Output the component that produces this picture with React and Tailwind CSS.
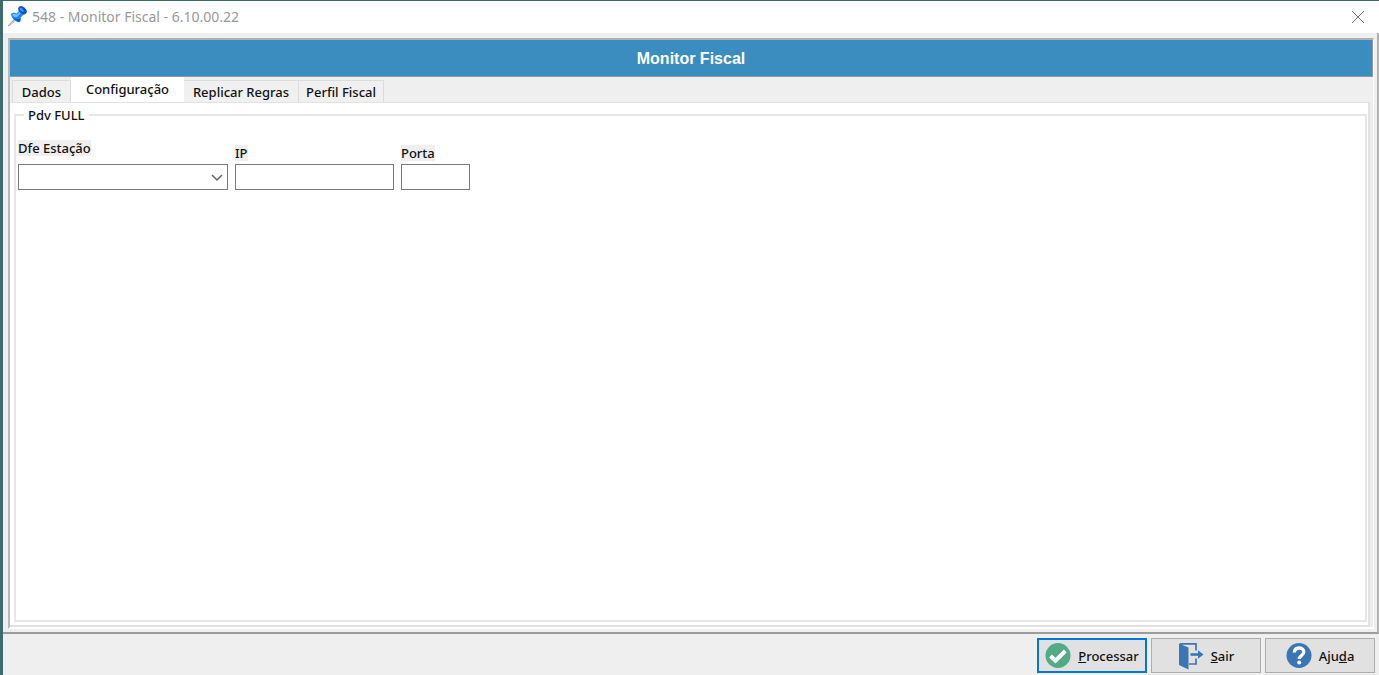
import React, { useState } from "react";

const tabs = [
  { id: "dados", label: "Dados", width: "w-[59px]" },
  { id: "config", label: "Configuração", width: "w-[113px]" },
  { id: "regras", label: "Replicar Regras", width: "w-[115px]" },
  { id: "perfil", label: "Perfil Fiscal", width: "w-[85px]" },
];

const PinIcon = () => (
  <svg width="20" height="22" viewBox="0 0 20 22" aria-hidden="true">
    <path d="M1 20 8 12l2 2-8 6.500z" fill="#c9c9cc" />
    <path d="M1 20 7.500 13" stroke="#a3a3a8" strokeWidth="1" />
    <path
      d="M4 8c1.600-1.500 4-1.400 5.500-.6L13.500 3.500l4 4-3.800 4c.6 1.800.2 3.800-1.400 5C8.500 15.800 4.500 12 4 8z"
      fill="#1c86ee"
    />
    <path d="M5 8.500c2-1.200 4-.6 5 0l4-4 1.300 1.300L10 11C8 11.500 6 10.500 5 8.500z" fill="#6cc0ff" />
    <path d="M12.500 15.700c-3-.6-5-2.200-6.500-4.200 3 2 5 2.500 7.200 1z" fill="#0b4fc4" />
    <ellipse cx="15.500" cy="4.300" rx="4.800" ry="3.300" transform="rotate(42 15.500 4.300)" fill="#0d50c8" />
    <ellipse cx="14.700" cy="3.900" rx="2.500" ry="1.300" transform="rotate(42 14.700 3.900)" fill="#3d9bf5" />
  </svg>
);

const CheckIcon = () => (
  <svg width="26" height="26" viewBox="0 0 26 26" aria-hidden="true">
    <circle cx="13" cy="12.500" r="12.500" fill="#51ab84" />
    <path d="m5.500 13 5 4.700L20.300 8" fill="none" stroke="#fff" strokeWidth="4" />
  </svg>
);

const ExitIcon = () => (
  <svg width="26" height="28" viewBox="0 0 26 28" aria-hidden="true">
    <path d="M1 1.500 10.500 5.500V27.500L1 23z" fill="#3a76b5" />
    <path
      d="M2 1.800h16v6.700M18 16.500v5.500h-7"
      fill="none"
      stroke="#3a76b5"
      strokeWidth="1.700"
    />
    <path d="M12.500 12.500h8" stroke="#3a76b5" strokeWidth="2.600" />
    <path d="m20 8.300 5.500 4.200-5.500 4.200z" fill="#3a76b5" />
  </svg>
);

const HelpIcon = () => (
  <svg width="26" height="26" viewBox="0 0 26 26" aria-hidden="true">
    <circle cx="13" cy="12.500" r="12.500" fill="#3a76b5" />
    <path
      d="M8.300 9.500c.2-3 2.200-4.500 4.700-4.500 2.800 0 4.800 1.600 4.800 4 0 3.500-4.500 3.400-4.500 7"
      fill="none"
      stroke="#fff"
      strokeWidth="3.300"
    />
    <circle cx="13.200" cy="19.500" r="2" fill="#fff" />
  </svg>
);

const App = () => {
  const [activeTab, setActiveTab] = useState("config");

  return (
    <div className="flex h-screen flex-col border-l-3 border-t border-[#3e6b6b] bg-[#efefef] font-['Noto_Sans','Open_Sans',sans-serif] text-[13px] font-medium leading-4 text-[#111]">
      <header className="flex h-8 shrink-0 items-center bg-white pl-1 pr-2.5">
        <PinIcon />
        <h1 className="ml-[5px] text-sm font-normal text-[#999]">
          548 - Monitor Fiscal - 6.10.00.22
        </h1>
        <button type="button" aria-label="Fechar" className="ml-auto p-1">
          <svg width="14" height="14" viewBox="0 0 14 14">
            <path d="m1 1 12 12M13 1 1 13" stroke="#777" strokeWidth="1" />
          </svg>
        </button>
      </header>

      <main className="flex min-h-0 flex-1 flex-col border-b-2 border-r-2 border-b-[#9c9c9c] border-r-[#b0b0b0] pb-[3px] pl-[5px] pr-[3px] pt-[5px]">
        <div className="flex min-h-0 flex-1 flex-col border-b-2 border-l-2 border-r border-t-2 border-b-white border-l-[#b8b8b8] border-r-white border-t-[#b0b0b0]">
          <h2 className="flex h-[37px] shrink-0 items-center justify-center border-b border-r border-[#8c9aa5] bg-[#3b8dc0] pt-0.5 font-['Liberation_Sans',Arial,sans-serif] text-base font-bold text-white">
            Monitor Fiscal
          </h2>

          <div role="tablist" className="flex h-[25px] shrink-0 items-end pl-0.5">
            {tabs.map((tab) => (
              <button
                key={tab.id}
                type="button"
                role="tab"
                aria-selected={activeTab === tab.id}
                onClick={() => setActiveTab(tab.id)}
                className={`${tab.width} whitespace-nowrap ${
                  activeTab === tab.id
                    ? "h-[25px] bg-white pb-px"
                    : "h-[22px] border-r border-t border-[#dcdcdc] bg-[#f0f0f0] first:border-l"
                }`}
              >
                {tab.label}
              </button>
            ))}
          </div>

          <section
            role="tabpanel"
            className="mr-[3px] flex min-h-0 flex-1 flex-col border-b-2 border-r-2 border-t border-[#e2e2e2] bg-white pb-[3px] pl-1 pr-px pt-1"
          >
            <fieldset className="min-h-0 flex-1 border-2 border-[#e6e6e6] px-0.5">
              <legend className="ml-1.5 px-1">Pdv FULL</legend>
              <div className="mt-[17px] flex items-end gap-[7px]">
                <div className="flex flex-col items-start gap-2">
                  <label htmlFor="estacao" className="bg-[#efefef]">
                    Dfe Estação
                  </label>
                  <div className="relative">
                    <select
                      id="estacao"
                      className="block h-[26px] w-[210px] appearance-none border border-[#7a7a7a] bg-white px-1"
                    >
                      <option value=""></option>
                    </select>
                    <svg
                      className="pointer-events-none absolute right-[5px] top-[9px]"
                      width="12"
                      height="9"
                      viewBox="0 0 12 9"
                    >
                      <path d="m1 2 5 5 5-5" fill="none" stroke="#666" strokeWidth="1.500" />
                    </svg>
                  </div>
                </div>
                <div className="flex flex-col items-start gap-[3px]">
                  <label htmlFor="ip" className="bg-[#efefef]">
                    IP
                  </label>
                  <input
                    id="ip"
                    type="text"
                    className="h-[26px] w-[159px] border border-[#7a7a7a] bg-white px-1"
                  />
                </div>
                <div className="flex flex-col items-start gap-[3px]">
                  <label htmlFor="porta" className="bg-[#efefef]">
                    Porta
                  </label>
                  <input
                    id="porta"
                    type="text"
                    className="h-[26px] w-[69px] border border-[#7a7a7a] bg-white px-1"
                  />
                </div>
              </div>
            </fieldset>
          </section>
        </div>
      </main>

      <footer className="flex h-[41px] shrink-0 items-start justify-end gap-1 pr-1 pt-1">
        <button
          type="button"
          className="flex h-[35px] w-[110px] items-center justify-center gap-[7px] border-2 border-[#0078d7] bg-[#e1e1e1]"
        >
          <CheckIcon />
          <span>
            <u>P</u>rocessar
          </span>
        </button>
        <button
          type="button"
          className="flex h-[35px] w-[110px] items-center justify-center gap-[7px] border border-[#adadad] bg-[#e1e1e1]"
        >
          <ExitIcon />
          <span>
            <u>S</u>air
          </span>
        </button>
        <button
          type="button"
          className="flex h-[35px] w-[110px] items-center justify-center gap-[7px] border border-[#adadad] bg-[#e1e1e1]"
        >
          <HelpIcon />
          <span>
            Aju<u>d</u>a
          </span>
        </button>
      </footer>
    </div>
  );
};

export default App;
